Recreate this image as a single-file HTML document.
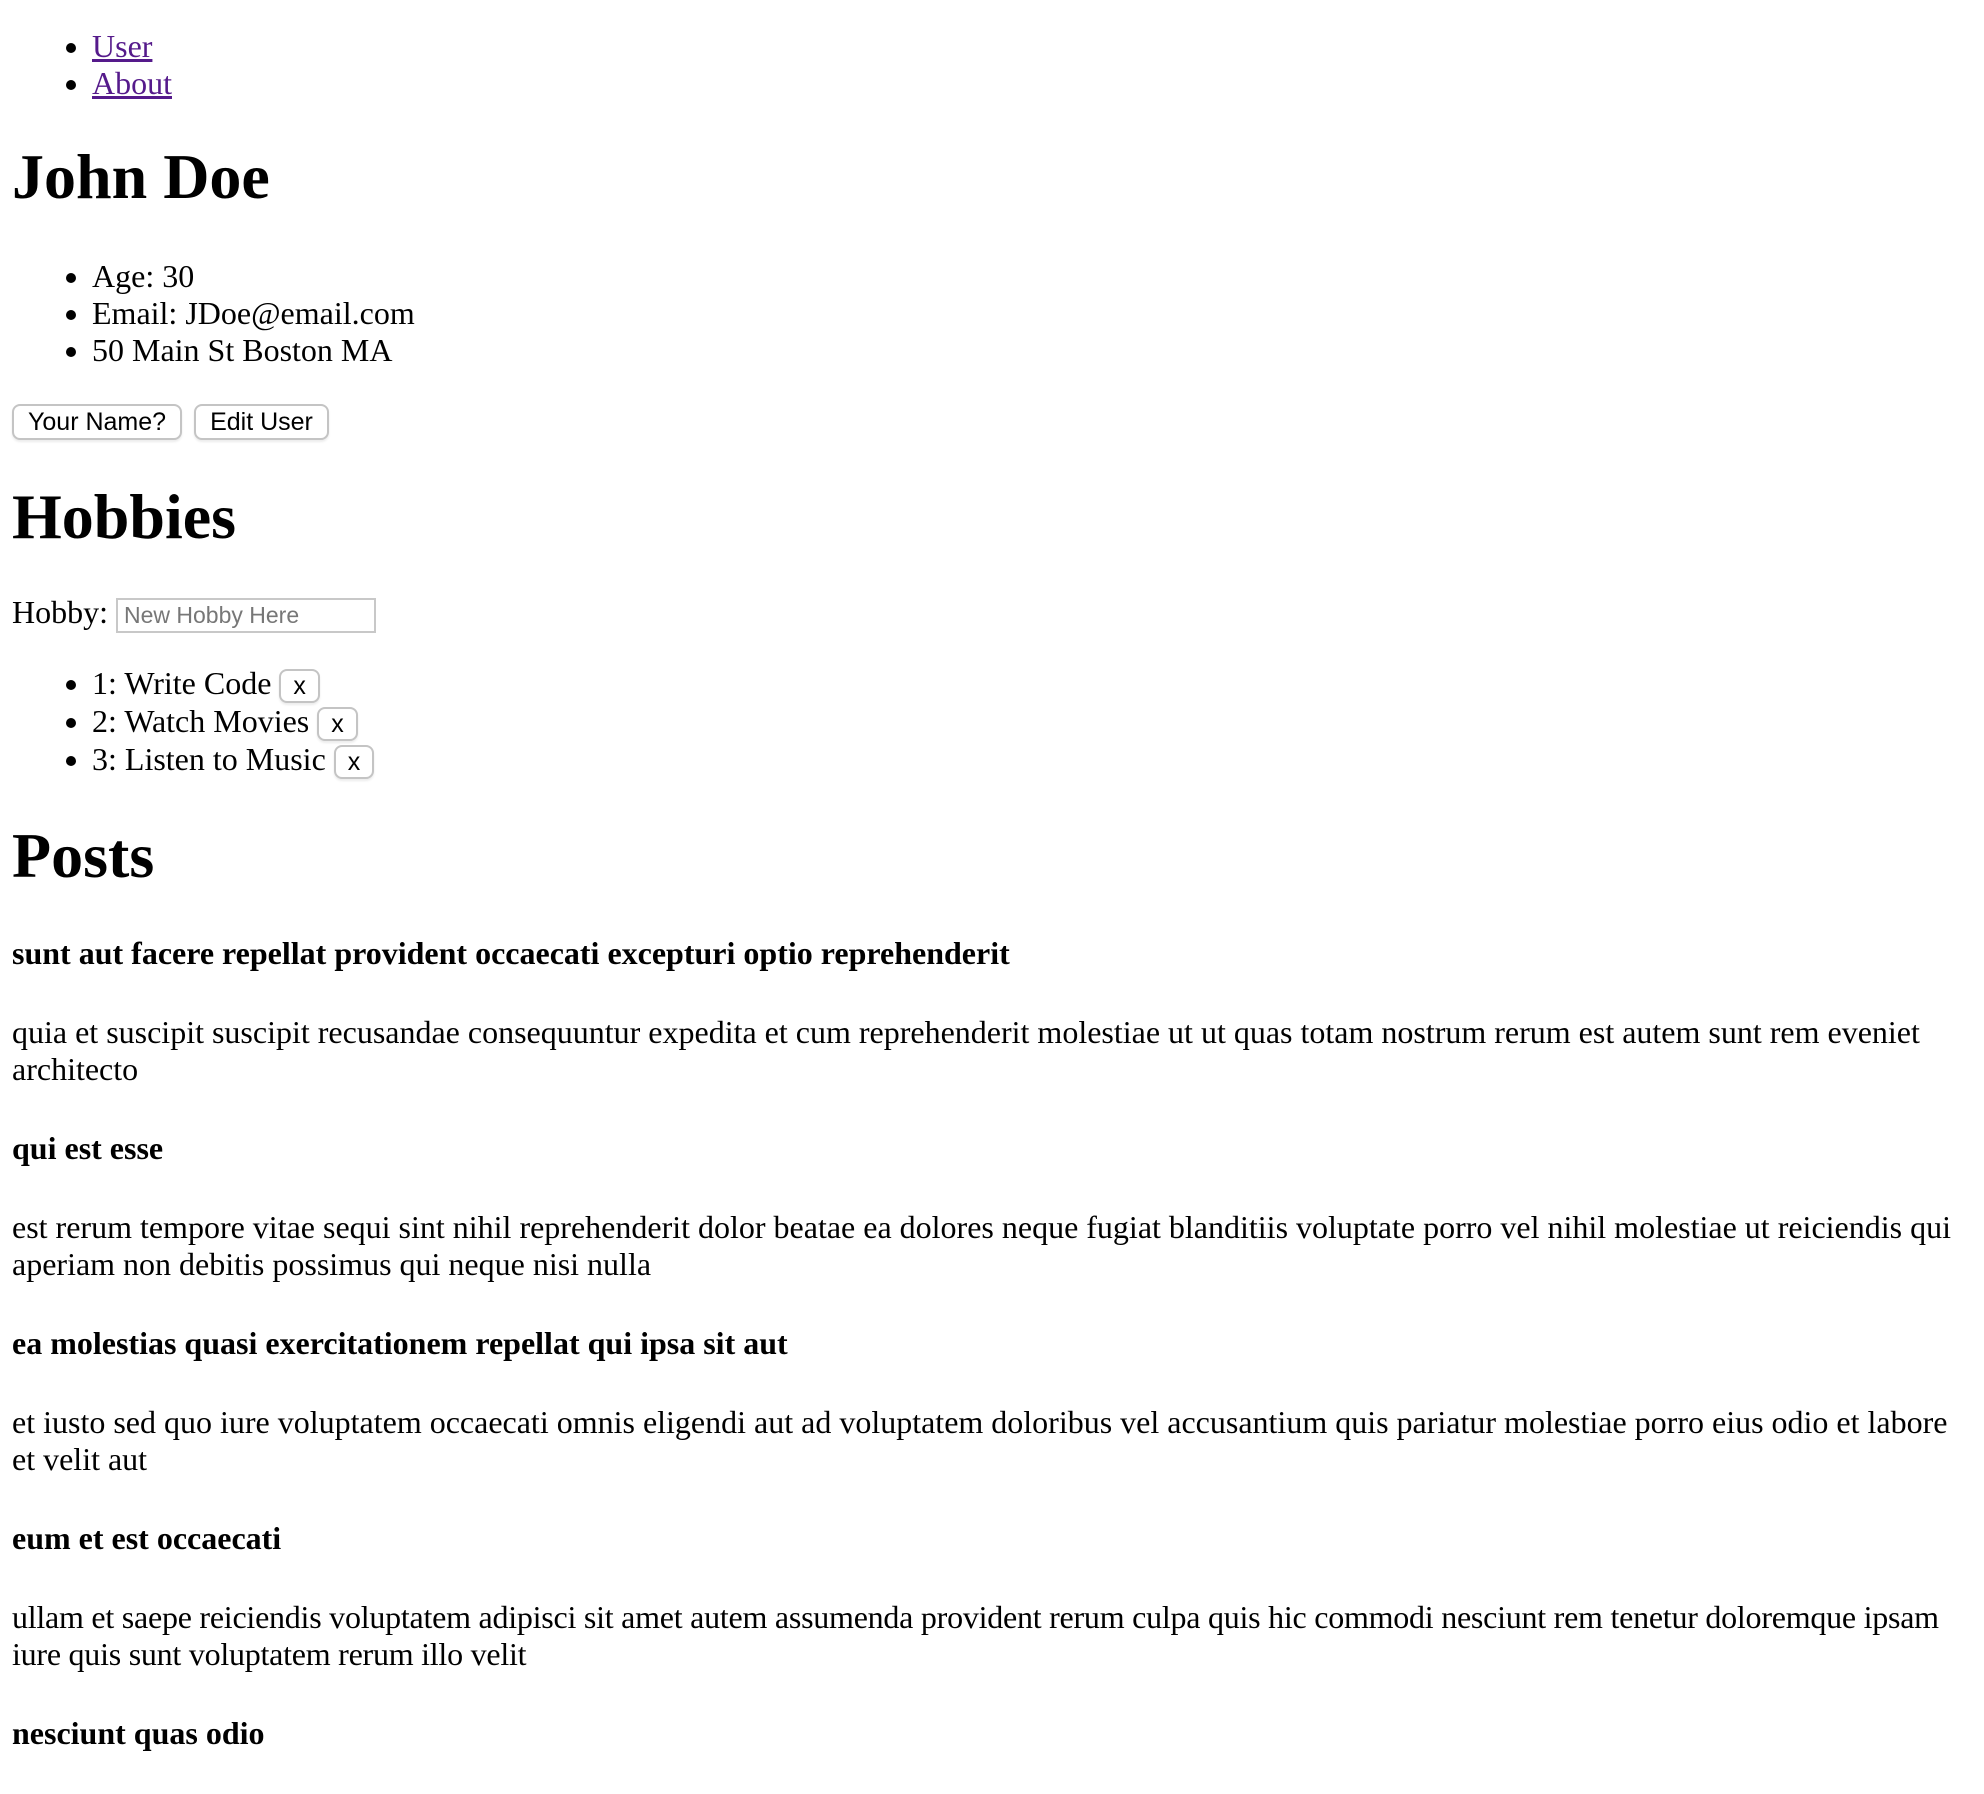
<!DOCTYPE html>
<html>
<head>
<meta charset="utf-8">
<style>
html{zoom:2;background:#fff;}
body{margin:3px 6px 8px 6px;font-family:"Liberation Serif",serif;font-size:16px;color:#000;width:980px;}
a{color:#551a8b;}
button{font-family:"Liberation Sans",sans-serif;font-size:12.5px;line-height:14px;background:#fff;border:1px solid #c4c4c4;border-radius:4px;padding:1px 7px;margin:0 2px 0 0;color:#000;box-shadow:0 1px 1px rgba(0,0,0,0.08);vertical-align:baseline;}
li button{padding:0 6px;line-height:15px;}
input{font-family:"Liberation Sans",sans-serif;font-size:11.5px;border:1px solid #c8c8c8;padding:1px 3px;width:122px;}
input::placeholder{color:#777;}
ul{margin:16px 0;padding-left:40px;}
h1{font-size:32px;margin:20px 0;}
h4{font-size:16px;margin:21px 0;}
p{margin:16px 0;}
</style>
</head>
<body>
<ul style="margin-top:14px">
<li><a href="#">User</a></li>
<li><a href="#">About</a></li>
</ul>
<h1 style="margin:19px 0 22px">John Doe</h1>
<ul>
<li>Age: 30</li>
<li>Email: JDoe@email.com</li>
<li>50 Main St Boston MA</li>
</ul>
<button>Your Name?</button> <button>Edit User</button>
<h1>Hobbies</h1>
<div>Hobby: <input placeholder="New Hobby Here"></div>
<ul>
<li>1: Write Code <button>x</button></li>
<li>2: Watch Movies <button>x</button></li>
<li>3: Listen to Music <button>x</button></li>
</ul>
<h1>Posts</h1>
<h4>sunt aut facere repellat provident occaecati excepturi optio reprehenderit</h4>
<p>quia et suscipit suscipit recusandae consequuntur expedita et cum reprehenderit molestiae ut ut quas totam nostrum rerum est autem sunt rem eveniet architecto</p>
<h4>qui est esse</h4>
<p>est rerum tempore vitae sequi sint nihil reprehenderit dolor beatae ea dolores neque fugiat blanditiis voluptate porro vel nihil molestiae ut reiciendis qui aperiam non debitis possimus qui neque nisi nulla</p>
<h4>ea molestias quasi exercitationem repellat qui ipsa sit aut</h4>
<p>et iusto sed quo iure voluptatem occaecati omnis eligendi aut ad voluptatem doloribus vel accusantium quis pariatur molestiae porro eius odio et labore et velit aut</p>
<h4>eum et est occaecati</h4>
<p style="letter-spacing:-0.12px">ullam et saepe reiciendis voluptatem adipisci sit amet autem assumenda provident rerum culpa quis hic commodi nesciunt rem tenetur doloremque ipsam iure quis sunt voluptatem rerum illo velit</p>
<h4>nesciunt quas odio</h4>
</body>
</html>
